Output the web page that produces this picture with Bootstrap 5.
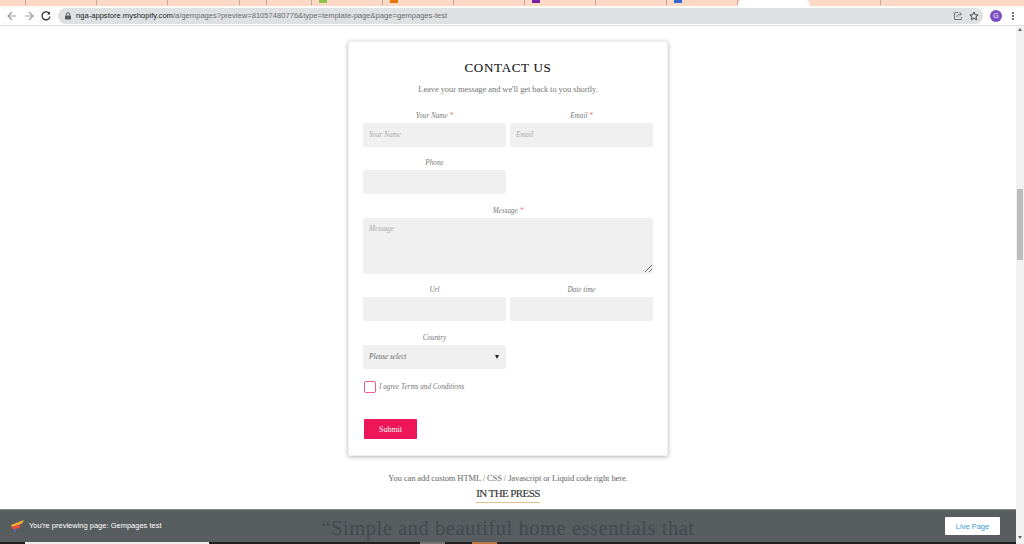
<!DOCTYPE html>
<html lang="en">
<head>
<meta charset="utf-8">
<title>Contact us preview</title>
<link href="https://cdn.jsdelivr.net/npm/bootstrap@5.3.0/dist/css/bootstrap.min.css" rel="stylesheet">
<style>
html,body{height:544px;overflow:hidden;background:#fff}
body{font-family:"Liberation Serif",serif;position:relative}
.tabstrip{height:6px;background:#fdd9c5}
.tabcell{border-right:1px solid #b9a79c;height:5px}
.tabmark{width:8px;height:3px;margin-left:7px}
.tabactive{width:72px;height:6px;background:#fff;border-radius:5px 5px 0 0}
.toolbar{height:19px;background:#fff;border-bottom:1px solid #dcdcdc;padding-left:6px;box-sizing:content-box}
.navicon{width:12px;height:12px;margin-right:5px;flex:none}
.urlbar{margin-left:1px;width:925px;height:16px;background:#dfe0e1;border-radius:8px;font:7.6px "Liberation Sans",sans-serif;color:#6a6c70;padding:0 4px 0 6px}
.urlhost{color:#202124}
.shareicon{margin-right:6px}
.avatar{width:12px;height:12px;border-radius:50%;background:#7a4fc4;color:#fff;font:7px "Liberation Sans",sans-serif;margin-left:7px}
.dots{width:2px;height:2px;background:#444;box-shadow:0 -3px #444,0 3px #444;border-radius:50%;margin-left:10px}
.viewport{height:518px}
.pagearea{min-width:0;padding-top:15px}
.scrolltrack{width:8px;background:#f1f1f1;padding-top:2px}
.scrollthumb{height:71px;background:#bdbdbd;margin:158px 1px 0}
.scrollup{width:0;height:0;border:2px solid transparent;border-bottom:3px solid #666;border-top:0;margin:0 auto}
.scrolldown{width:0;height:0;border:2px solid transparent;border-top:3px solid #666;border-bottom:0;margin:auto auto 5px}
.formcard{width:320px;height:415px;padding:18px 14px 0;border:1px solid #efefef;border-radius:2px;box-shadow:0 1px 4px rgba(0,0,0,.3)}
.formtitle{font-size:13px;line-height:16px;letter-spacing:.7px;color:#111;font-weight:400;margin:0 0 6px;-webkit-text-stroke:.1px #111}
.formsub{font-size:8.5px;line-height:14px;color:#777;letter-spacing:-.08px;margin:0 0 15px}
.fieldlabel{display:block;font-size:7.2px;font-style:italic;line-height:10px;color:#777;text-align:center;margin-bottom:2px}
.req{color:#e77}
.fieldbox{width:100%;height:23px;background:#f0f0f0;border:0;border-radius:2px;box-shadow:0 1px 1px rgba(0,0,0,.06);padding:0 6px;font:italic 7.2px "Liberation Serif",serif;color:#666;display:block}
.fieldbox::placeholder{color:#aaa}
.fieldspace{margin-bottom:13px}
.fieldtight{margin-bottom:12px}
textarea.fieldbox{height:55px;padding-top:7px;resize:vertical}
.selectbox{padding-right:7px}
.caret{width:0;height:0;border:2.5px solid transparent;border-top:4px solid #222;border-bottom:0}
.agreebox{width:12px;height:12px;border:1px solid #ef1559;border-radius:2px;margin:0 3px 0 1px;flex:none;opacity:.7}
.agreetext{font-size:7.2px;font-style:italic;color:#777}
.agreerow{height:12px}
.submitbtn{width:53px;height:20px;margin:26px 0 0 1px;padding:0;background:#ef1559;border:0;border-radius:1px;color:#fff;font:400 8px "Liberation Serif",serif}
.customnote{font-size:8.5px;line-height:12px;letter-spacing:-.1px;color:#666;margin:16px 0 3px}
.presshead{font-size:11px;line-height:13px;color:#333;border-bottom:1px solid #e2c08d;padding-bottom:2px;font-weight:400;letter-spacing:-.6px;margin:0;-webkit-text-stroke:.15px #333}
.quote{font-size:20.5px;letter-spacing:.55px;line-height:24px;color:#333;margin:13px 0 0;white-space:nowrap}
.previewbar{position:absolute;left:0;right:8px;top:509px;height:33px;background:rgba(70,75,79,.9);border-top:1px solid #888;padding:0 16px 0 11px;font:7.5px "Liberation Sans",sans-serif;color:#fff}
.previewtext{margin-top:-2px}
.livebtn{width:55px;height:18px;padding:0;background:#fff;border:0;border-radius:1px;color:#3a9ad9;font:7.5px "Liberation Sans",sans-serif}
.logo{width:13px;height:13px;margin-right:5px}
.peek{position:absolute;left:0;right:8px;top:542px;height:2px;background:#222}
.peekwhite{position:absolute;left:25px;width:184px;top:0;height:2px;background:#eee}
.peekgrey{position:absolute;left:420px;width:25px;top:0;height:2px;background:#777}
.peekorange{position:absolute;left:472px;width:25px;top:0;height:2px;background:#b9783f}
</style>
</head>
<body>
<div class="tabstrip d-flex">
  <div class="tabcell" style="width:26px"></div>
  <div class="tabcell" style="width:71px"></div>
  <div class="tabcell" style="width:71px"></div>
  <div class="tabcell" style="width:72px"></div>
  <div class="tabcell" style="width:27px"></div>
  <div class="tabcell" style="width:45px"></div>
  <div class="tabcell d-flex" style="width:71px"><span class="tabmark" style="background:#8bc34a"></span></div>
  <div class="tabcell d-flex" style="width:71px"><span class="tabmark" style="background:#e8710a"></span></div>
  <div class="tabcell" style="width:71px"></div>
  <div class="tabcell d-flex" style="width:71px"><span class="tabmark" style="background:#7b1fa2"></span></div>
  <div class="tabcell" style="width:71px"></div>
  <div class="tabcell d-flex" style="width:71px"><span class="tabmark" style="background:#3367d6"></span></div>
  <div class="tabactive"></div>
  <div class="tabcell" style="width:71px"></div>
</div>
<div class="toolbar d-flex align-items-center">
  <svg class="navicon" viewBox="0 0 12 12" fill="none" stroke="#9a9ea3" stroke-width="1.2"><path d="M10 6H2M6 2 2 6l4 4"/></svg>
  <svg class="navicon" viewBox="0 0 12 12" fill="none" stroke="#9a9ea3" stroke-width="1.2"><path d="M2 6h8M6 2l4 4-4 4"/></svg>
  <svg class="navicon" viewBox="0 0 12 12" fill="none" stroke="#333" stroke-width="1.3"><path d="M9.6 4A4 4 0 1 0 10 6.500"/><path d="M10 1.500V4.500H7" fill="#333" stroke="none"/></svg>
  <div class="urlbar d-flex align-items-center">
    <svg width="8" height="8" viewBox="0 0 8 8" class="me-1 flex-none"><rect x="1" y="3.400" width="6" height="4.200" rx=".6" fill="#55585c"/><path d="M2.400 3.500V2.300a1.600 1.600 0 0 1 3.200 0v1.200" fill="none" stroke="#55585c"/></svg>
    <span class="flex-grow-1"><span class="urlhost">nga-appstore.myshopify.com</span>/a/gempages?preview=81057480776&amp;type=template-page&amp;page=gempages-test</span>
    <svg width="10" height="10" viewBox="0 0 10 10" fill="none" stroke="#777" class="shareicon"><path d="M5 1.500H1.500v7h7V6M4 6c0-2 1.500-3 4-3M6.500 1.200 8.500 3l-2 1.800"/></svg>
    <svg width="10" height="10" viewBox="0 0 10 10" fill="none" stroke="#444"><path d="m5 1 1.200 2.700 2.900.3-2.200 1.900.7 2.900L5 7.300 2.400 8.800l.7-2.900L.9 4l2.900-.3z"/></svg>
  </div>
  <div class="avatar d-flex align-items-center justify-content-center">G</div>
  <div class="dots"></div>
</div>
<div class="viewport d-flex">
  <main class="pagearea flex-grow-1 d-flex flex-column align-items-center text-center">
    <form class="formcard bg-white flex-none text-start">
      <h2 class="formtitle text-center">CONTACT US</h2>
      <p class="formsub text-center">Leave your message and we'll get back to you shortly.</p>
      <div class="row gx-1">
        <div class="col-6 fieldtight"><label class="fieldlabel">Your Name <span class="req">*</span></label><input class="fieldbox" placeholder="Your Name"></div>
        <div class="col-6 fieldtight"><label class="fieldlabel">Email <span class="req">*</span></label><input class="fieldbox" placeholder="Email"></div>
        <div class="col-6 fieldspace"><label class="fieldlabel">Phone</label><input class="fieldbox"></div>
        <div class="col-6"></div>
        <div class="col-12 fieldtight"><label class="fieldlabel">Message <span class="req">*</span></label><textarea class="fieldbox" placeholder="Message"></textarea></div>
        <div class="col-6 fieldspace"><label class="fieldlabel">Url</label><input class="fieldbox"></div>
        <div class="col-6 fieldspace"><label class="fieldlabel">Date time</label><input class="fieldbox"></div>
        <div class="col-6 fieldspace"><label class="fieldlabel">Country</label><div class="fieldbox selectbox d-flex align-items-center justify-content-between"><span>Please select</span><span class="caret"></span></div></div>
      </div>
      <div class="agreerow d-flex align-items-center"><span class="agreebox"></span><span class="agreetext">I agree Terms and Conditions</span></div>
      <button type="button" class="submitbtn d-block">Submit</button>
    </form>
    <p class="customnote">You can add custom HTML / CSS / Javascript or Liquid code right here.</p>
    <h3 class="presshead">IN THE PRESS</h3>
    <p class="quote">“Simple and beautiful home essentials that</p>
  </main>
  <div class="scrolltrack flex-none d-flex flex-column"><div class="scrollup"></div><div class="scrollthumb"></div><div class="scrolldown"></div></div>
</div>
<div class="peek"><span class="peekwhite"></span><span class="peekgrey"></span><span class="peekorange"></span></div>
<div class="previewbar d-flex align-items-center">
  <svg class="logo" viewBox="0 0 13 13"><path d="M0 5 13 0l-2 3.500L1 7z" fill="#fbb034"/><path d="M1 7l9-2.500L8 8 2 9.500z" fill="#f0483e"/><path d="M3 10l2.500-.8L3.500 13z" fill="#5b6ee1"/></svg>
  <span class="flex-grow-1 previewtext">You're previewing page: Gempages test</span>
  <button type="button" class="livebtn">Live Page</button>
</div>
</body>
</html>
